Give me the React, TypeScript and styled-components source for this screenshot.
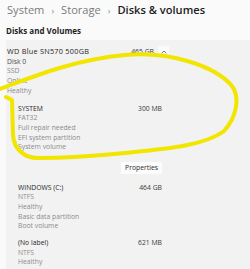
import React from "react";
import styled, { createGlobalStyle } from "styled-components";

const Global = createGlobalStyle`
  html, body { margin: 0; padding: 0; background: #fafafa; }
  body { font-family: "Open Sans", "Noto Sans", sans-serif; overflow: hidden; }
`;

const Page = styled.div`
  position: relative;
  width: 250px;
  height: 269px;
  overflow: hidden;
  display: flex;
  flex-direction: column;
`;

const Breadcrumb = styled.div`
  display: flex;
  align-items: baseline;
  gap: 7px;
  padding: 1px 0 0 7px;
  height: 20px;
  font-size: 11.1px;
  line-height: 18px;
  white-space: nowrap;
`;

const Crumb = styled.span<{ $current?: boolean }>`
  color: ${(p) => (p.$current ? "#1b1b1b" : "#7a7a7a")};
  font-weight: ${(p) => (p.$current ? 600 : 400)};
`;

const Sep = styled.span`
  color: #8a8a8a;
  font-size: 9px;
`;

const SectionTitle = styled.div`
  padding: 4px 0 0 6px;
  height: 15px;
  font-size: 8px;
  line-height: 12px;
  font-weight: 700;
  color: #1f1f1f;
`;

const Card = styled.div`
  flex: 1;
  margin-left: 6px;
  background: #f2f2f2;
  padding-top: 7px;
  font-size: 6.8px;
  line-height: 9.7px;
`;

const DiskHeader = styled.div`
  display: grid;
  grid-template-columns: 1fr auto auto;
  align-items: start;
  padding-left: 1px;
  width: 162px;
`;

const Lines = styled.div`
  display: flex;
  flex-direction: column;
`;

const Line = styled.div<{ $tone: "strong" | "mid" | "muted" }>`
  color: ${(p) =>
    p.$tone === "strong" ? "#262626" : p.$tone === "mid" ? "#4e4e4e" : "#8c8c8c"};
  white-space: nowrap;
`;

const DiskName = styled(Line)`
  font-size: 7.3px;
  letter-spacing: 0.25px;
`;

const Size = styled.div`
  color: #3a3a3a;
  white-space: nowrap;
  text-align: right;
`;

const Chevron = styled.div`
  width: 11px;
  height: 11px;
  margin: -1px 0 0 4px;
  background: #fafafa;
  display: flex;
  align-items: center;
  justify-content: center;
`;

const VolumeList = styled.div`
  display: flex;
  flex-direction: column;
  padding: 8px 0 0 12px;
  width: 144px;
`;

const Volume = styled.div<{ $gap: number }>`
  display: grid;
  grid-template-columns: 1fr auto;
  margin-bottom: ${(p) => p.$gap}px;
`;

const Actions = styled.div`
  display: flex;
  justify-content: flex-end;
  margin: 10px 0 9px;
`;

const Button = styled.div`
  width: 41px;
  height: 11.5px;
  background: #fcfcfc;
  color: #2a2a2a;
  font-size: 6.8px;
  line-height: 11.5px;
  text-align: center;
`;

const Scribble = styled.svg`
  position: absolute;
  left: 0;
  top: 0;
  pointer-events: none;
`;

type Row = { text: string; tone: "strong" | "mid" | "muted" };

const volumes: { size: string; rows: Row[]; gap: number; props?: boolean }[] = [
  {
    size: "300 MB",
    gap: 0,
    props: true,
    rows: [
      { text: "SYSTEM", tone: "strong" },
      { text: "FAT32", tone: "muted" },
      { text: "Full repair needed", tone: "muted" },
      { text: "EFI system partition", tone: "muted" },
      { text: "System volume", tone: "muted" },
    ],
  },
  {
    size: "464 GB",
    gap: 7,
    rows: [
      { text: "WINDOWS (C:)", tone: "strong" },
      { text: "NTFS", tone: "muted" },
      { text: "Healthy", tone: "muted" },
      { text: "Basic data partition", tone: "muted" },
      { text: "Boot volume", tone: "muted" },
    ],
  },
  {
    size: "621 MB",
    gap: 0,
    rows: [
      { text: "(No label)", tone: "strong" },
      { text: "NTFS", tone: "muted" },
      { text: "Healthy", tone: "muted" },
    ],
  },
];

export default function App() {
  return (
    <Page>
      <Global />
      <Breadcrumb>
        <Crumb>System</Crumb>
        <Sep>›</Sep>
        <Crumb>Storage</Crumb>
        <Sep>›</Sep>
        <Crumb $current>Disks &amp; volumes</Crumb>
      </Breadcrumb>
      <SectionTitle>Disks and Volumes</SectionTitle>
      <Card>
        <DiskHeader>
          <Lines>
            <DiskName $tone="strong">WD Blue SN570 500GB</DiskName>
            <Line $tone="mid">Disk 0</Line>
            <Line $tone="muted">SSD</Line>
            <Line $tone="muted">Online</Line>
            <Line $tone="muted">Healthy</Line>
          </Lines>
          <Size>465 GB</Size>
          <Chevron>
            <svg width="6" height="4" viewBox="0 0 6 4">
              <path d="M0.6 3.4 L3 1 L5.4 3.4" fill="none" stroke="#555" strokeWidth="0.8" />
            </svg>
          </Chevron>
        </DiskHeader>
        <VolumeList>
          {volumes.map((v) => (
            <React.Fragment key={v.size}>
              <Volume $gap={v.gap}>
                <Lines>
                  {v.rows.map((r) => (
                    <Line key={r.text} $tone={r.tone}>
                      {r.text}
                    </Line>
                  ))}
                </Lines>
                <Size>{v.size}</Size>
              </Volume>
              {v.props && (
                <Actions>
                  <Button>Properties</Button>
                </Actions>
              )}
            </React.Fragment>
          ))}
        </VolumeList>
      </Card>
      <Scribble width="250" height="269" viewBox="0 0 250 269">
        <path
          d="M 0 89 C 25 80, 70 60, 125 55 C 170 51, 215 66, 232 86 C 240 97, 237 117, 224 131 C 204 146, 165 149, 125 153 C 95 156, 60 158, 38 158 C 25 158, 14 150, 13 135 L 12 100 L 6 97"
          fill="none"
          stroke="#f2e500"
          strokeWidth="4"
          strokeLinecap="round"
          strokeLinejoin="round"
        />
      </Scribble>
    </Page>
  );
}
